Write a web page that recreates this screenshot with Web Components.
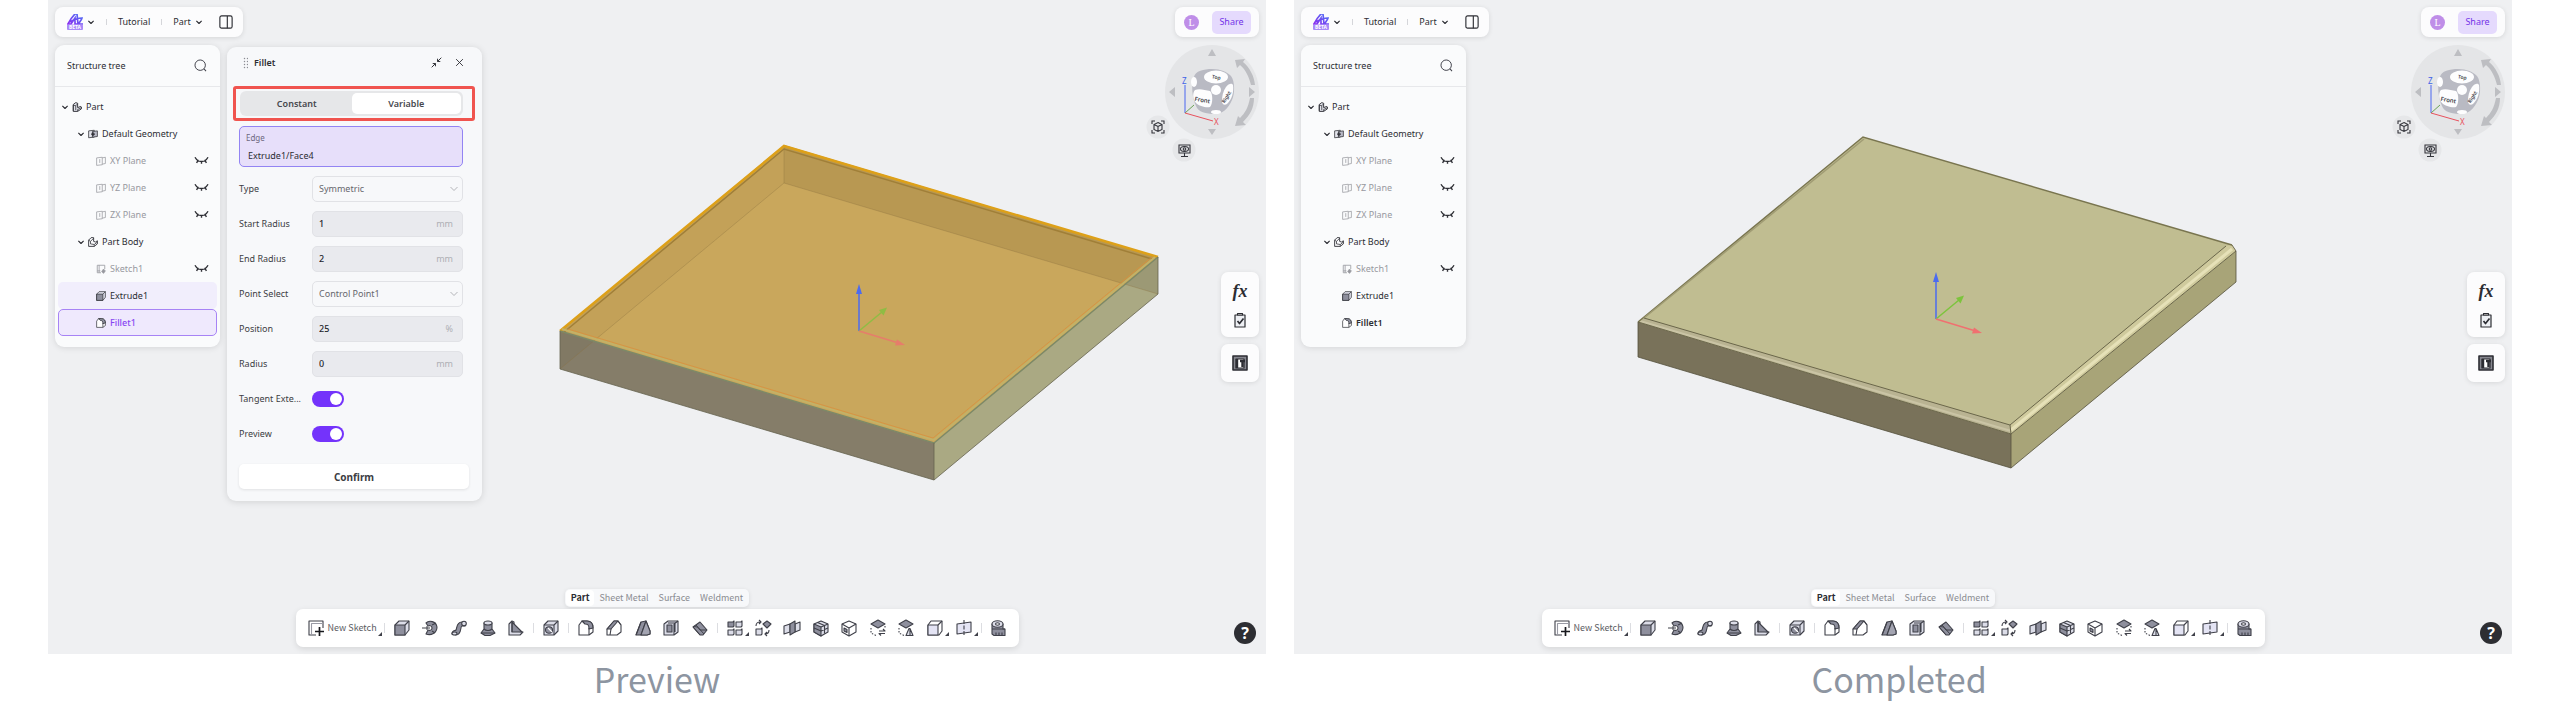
<!DOCTYPE html>
<html lang="en">
<head>
<meta charset="utf-8">
<title>Fillet tool: preview and result</title>
<style>
  body { margin: 0; background: #fff; color: #2c2d33; font-family: "Noto Sans", "Open Sans", sans-serif; font-size: 9px; line-height: 12px; }
  main { display: flex; gap: 28px; padding: 0 48px; }
</style>
</head>
<body>
<main>
  <cad-figure caption="Preview">
    <cad-workspace model="preview">
      <structure-tree slot="tree" hovered="Extrude1" selected="Fillet1"></structure-tree>
      <fillet-panel slot="panel"></fillet-panel>
    </cad-workspace>
  </cad-figure>
  <cad-figure caption="Completed&nbsp;">
    <cad-workspace model="completed">
      <structure-tree slot="tree" current="Fillet1"></structure-tree>
    </cad-workspace>
  </cad-figure>
</main>

<script>
const BASE = `
  :host, *, *::before, *::after { box-sizing: border-box; }
  button, input, select { font: inherit; color: inherit; margin: 0; padding: 0; border: 0; background: none; }
  button { display: flex; align-items: center; justify-content: center; cursor: pointer; }
  svg { display: block; }
`;

/* Icon drawings on a 16 x 16 grid. D is the dark face, L the light one. */
const D = '#8e8f9d', L = '#dcdde8', K = '#3f4049';
const ICONS = {
  chevron: `<path d="M1 5l7 7 7-7" stroke-width="3"/>`,
  thin: `<path d="M1 4l7 7 7-7" stroke-width="1.5"/>`,
  sidebar: `<rect x="1" y="1" width="14" height="14" rx="2" stroke-width="1.3"/><path d="M9.5 1v14" stroke-width="1.3"/>`,
  search: `<circle cx="7.6" cy="7.6" r="6.4" stroke-width="1.2"/><path d="M12.3 12.3l2.5 2.5" stroke-width="1.3"/>`,
  part: `<path d="M2 4l4-3 3 1v7l5-2 1 1v3l-6 4H2z" fill="#e3e4ec" stroke-width="1.5"/><path d="M2 14V5l4 1v7M6 6l3-3M9 12v3M9 12l6-3" stroke-width="1.2"/>`,
  geometry: `<path d="M1 3l9-1v11l-9 1z" stroke-width="1.2" fill="#e3e4ec"/><path d="M7 4l8-1v9l-8 1z" stroke-width="1.2" fill="#b8b9c6"/><path d="M8 5v6M5 8h6" stroke-width="2"/>`,
  body: `<path d="M1 5l4-4h4v6l3 1 3-2v5l-5 4H1z" fill="#fafafc" stroke-width="1.4"/><path d="M1 5l3 2v4l6 1v3M4 7l5-5M10 12l5-4" stroke-width="1.2"/>`,
  plane: `<path d="M1 3l9-1v12l-9 1zM10 3l5-1v10l-5 1" stroke-width="1.2"/><path d="M6 5v6" stroke-width="1.2"/>`,
  sketchSmall: `<path d="M14 8V2H2v12h6M5 2v12M2 11h5" stroke-width="1.3"/><path d="M12 8l3 3-3 4-3-3z" fill="currentColor"/>`,
  eye: `<path d="M0 4c4 7 12 7 16 0M4 7l-2 4M8 9v3M12 7l2 4" stroke-width="1.7"/>`,
  collapse: `<path d="M15 1L9.500 6.500M9.500 2.500v4h4M1 15l5.500-5.500M2.500 9.500h4v4" stroke-width="1.4"/>`,
  close: `<path d="M2 2l12 12M14 2L2 14" stroke-width="1.6"/>`,
  clipboard: `<path d="M3 3h10v12H3z" stroke-width="1.2" fill="#eef0f4"/><path d="M5.500 3V1.500h5V3z" fill="#fff"/><path d="M5.500 9l2 2.500 4-5" stroke-width="1.7"/>`,
  table: `<rect x="1" y="1" width="14" height="14" fill="#85868e" stroke-width="1.6"/><path d="M4 4h8v9H4z" fill="#fff" stroke-width="1.2"/><path d="M5 4v9M8 6h5M10.500 6v6" stroke-width="2.400"/>`,
  sketch: `<path d="M15 8V1H1v14h7" fill="none"/><path d="M3.500 15V3.500H15" stroke="#9a9ba5"/><path d="M11.500 7v9M7 11.500h9" stroke="#17181c" stroke-width="1.7"/>`,
  extrude: `<path d="M1 5l4-4h10v9l-4 5H1z" fill="${L}"/><path d="M1 5h10v10H1z" fill="${D}"/><path d="M11 5l4-4"/>`,
  revolve: `<path d="M4 3c3-3 10-2 11 4 0 6-6 9-11 7l2-4c2 1 4 0 4-2s-2-3-4-2z" fill="${D}"/><path d="M0 8h8M5 6v4" stroke-width="1"/><path d="M10 5l4-2M10 11l3 2"/>`,
  sweep: `<path d="M1 14c0-4 3-3 4-4s0-8 6-8h3v4h-3c-2 0 0 9-6 9z" fill="${D}"/><circle cx="13" cy="3.500" r="2.300" fill="${L}"/><ellipse cx="3.500" cy="13.500" rx="2.500" ry="1.500" fill="${L}"/>`,
  loft: `<path d="M4 3v6l-3 4 4 2.500h5L15 13l-3-4V3z" fill="${D}"/><ellipse cx="8" cy="3" rx="4" ry="2" fill="${L}"/><path d="M4 9c2 2 6 2 8 0M1 13h14" />`,
  rib: `<path d="M1 4l3-3 2 1v9l9 1-3 3H1z" fill="${L}"/><path d="M4 2l10 10H4z" fill="${D}"/><path d="M4 2v10"/>`,
  hole: `<path d="M1 5l4-4h10v10l-4 4H1z" fill="${L}"/><path d="M1 5h10v10M11 5l4-4"/><ellipse cx="6" cy="10" rx="3.500" ry="3.200" fill="${D}"/><path d="M5 8l4 4" stroke="#fff"/>`,
  fillet: `<path d="M1 15V5l3-4h5c4 0 6 3 6 7v4l-4 3z" fill="#fff"/><path d="M4 1h5c4 0 6 3 6 7l-4 1c0-4-1-5-4-5z" fill="${D}"/><path d="M11 8v7"/>`,
  chamfer: `<path d="M1 15V9l7-8h4l3 4v7l-4 3z" fill="#fff"/><path d="M1 9l7-8h4L5 9z" fill="${D}"/><path d="M5 9l-1 6M12 1l3 4"/>`,
  draft: `<path d="M1 15L6 2l5-1 4 10v3l-3 1z" fill="${D}"/><path d="M11 1L6 15M6 2L1 15" /><path d="M11 1l4 10v3l-3 1H6z" fill="#a3a4b1"/>`,
  shell: `<path d="M1 4l4-3h10v11l-4 3H1z" fill="${L}"/><path d="M4 5h5v7H4z" fill="${D}"/><path d="M11 4v11M11 4l4-3M5 3h7v9"/>`,
  thicken: `<path d="M1 7l7-5 7 8-4 5h-3z" fill="${D}"/><path d="M1 7l7 8M4 5l8 9M1 7c3-1 5 0 7 3l7 0" stroke-width="1"/>`,
  pattern: `<path d="M1 2h5l1-1v5l-1 1H1z" fill="${D}"/><path d="M9 2h5l1-1v5l-1 1H9zM1 10h5l1-1v5l-1 1H1zM9 10h5l1-1v5l-1 1H9z" fill="${L}"/>`,
  transform: `<path d="M8 4l4-3 4 3-4 4z" fill="${D}"/><path d="M1 9h5l1-1v6l-1 1H1z" fill="${L}"/><path d="M1 6c0-3 2-4 4-4M4 0l2 2-2 2M14 10c0 3-2 4-4 4M12 16l-2-2 2-2"/>`,
  mirror: `<path d="M0 6l6-2v8l-6 2zM11 4l5-2v8l-5 2z" fill="${L}"/><path d="M6 4l5-3v11l-5 3z" fill="${D}"/>`,
  boolean: `<path d="M1 4l7-3 7 3v8l-7 4-7-4z" fill="${L}"/><path d="M1 4l7 3v9l-7-4z" fill="${D}"/><path d="M8 7l7-3M4.500 2.500l7 3v8M1 8l7 3 7-3"/>`,
  cavity: `<path d="M1 4l7-3 7 3v8l-7 4-7-4z" fill="#fff"/><path d="M1 4l7 4v8M8 8l7-4"/><path d="M3 8l3 1.500v3L3 11z" fill="${D}"/>`,
  replace: `<path d="M1 4l7-4 7 4-7 4z" fill="${D}"/><path d="M1 8v5l6 3M15 6v3" stroke-dasharray="1.500 1.500"/><path d="M9 11h6l-2-2M15 13.500H9l2 2"/>`,
  offset: `<path d="M1 4l7-4 7 4-7 4z" fill="${D}"/><path d="M1 8v5l6 3" stroke-dasharray="1.500 1.500"/><path d="M8 15.500l3-7h1l3 7zM12 9v6" fill="${L}"/>`,
  block: `<path d="M1 5l3-4h11v10l-3 4H1z" fill="#fff"/><path d="M1 5h10v10H1z" fill="#e4e4f4"/><path d="M11 5l4-4"/>`,
  section: `<path d="M1 4l14-2v10L1 14z" fill="#e4e4f4"/><path d="M8 0v16" stroke-dasharray="4 1.500"/>`,
  measure: `<path d="M2 4v10l2 1.500h11V9H13V4z" fill="${D}"/><ellipse cx="7.500" cy="4" rx="5.500" ry="3.200" fill="${L}"/><ellipse cx="7.500" cy="4" rx="2" ry="1.200" fill="#fff"/><path d="M2 9h13M6 12.500v3M9 12.500v3M12 12.500v3"/>`
};

const TOOL_GROUPS = [
  ['extrude', 'revolve', 'sweep', 'loft', 'rib'],
  ['hole'],
  ['fillet', 'chamfer', 'draft', 'shell', 'thicken'],
  ['pattern+', 'transform', 'mirror', 'boolean', 'cavity', 'replace', 'offset', 'block+', 'section+'],
  ['measure']
];

function define(name, render) {
  customElements.define(name, class extends HTMLElement {
    connectedCallback() {
      if (this.shadowRoot) return;
      const tpl = document.createElement('template');
      tpl.innerHTML = render(this);
      this.attachShadow({ mode: 'open' }).append(tpl.content);
    }
  });
}

define('cad-icon', el => `<style>
  :host { display: block; flex: none; width: 16px; height: 16px; }
  svg { display: block; width: 100%; height: 100%; }
</style><svg viewBox="0 0 16 16" fill="none" stroke="${el.hasAttribute('tool') ? K : 'currentColor'}" stroke-width="1.1" stroke-linejoin="round" overflow="visible" aria-hidden="true">${ICONS[el.getAttribute('name')] || ''}</svg>`);

define('cad-figure', el => `<style>
  :host { display: block; flex: 1; min-width: 0; }
  figure { margin: 0; }
  figcaption { font: 400 34px/50px "Noto Sans CJK SC", "Noto Sans", sans-serif; color: #8d95a1; text-align: center; }
</style><figure><slot></slot><figcaption>${el.getAttribute('caption')}</figcaption></figure>`);

define('top-bar', () => `<style>${BASE}
  :host { display: flex; align-items: center; width: 188px; height: 30px; padding: 0 10px 0 12px; border-radius: 8px; background: #fcfcfd; box-shadow: 0 1px 5px #0000001c; }
  .logo { width: 16px; height: 16px; margin-right: 5px; }
  .tiny { width: 6px; height: 6px; }
  i { width: 1px; height: 6px; background: #d5d6da; }
  i.a { margin: 0 11px 0 12px; }
  i.b { margin: 0 11px; }
  .part { gap: 5px; }
  .side { margin-left: auto; }
  .side cad-icon { width: 14px; height: 14px; }
</style>
<button aria-label="Main menu">
  <svg class="logo" viewBox="0 0 16 16"><defs><linearGradient id="g" x1="0" y1="1" x2="1" y2="0"><stop offset="0" stop-color="#8b2cf0"/><stop offset="1" stop-color="#4a78f5"/></linearGradient></defs>
    <path d="M1 10C3 6 6 2 8 0h2l1 10H8L8 4 4 10zM3 8c2-2 9-4 12-4-1 3-3 4-3 6h4" fill="none" stroke="url(#g)" stroke-width="1.700"/>
    <rect x="0" y="10.500" width="16" height="5.500" rx="1" fill="#a98af8"/>
    <text x="8" y="15.200" font-size="5" font-weight="700" fill="#fff" text-anchor="middle">BETA</text></svg>
  <cad-icon class="tiny" name="chevron"></cad-icon></button>
<i class="a"></i><span>Tutorial</span><i class="b"></i>
<button class="part">Part <cad-icon class="tiny" name="chevron"></cad-icon></button>
<button class="side" aria-label="Toggle side panel"><cad-icon name="sidebar"></cad-icon></button>`);

const TREE = [
  ['Part', 1, 'part'], ['Default Geometry', 2, 'geometry'],
  ['XY Plane', 3, 'plane', true], ['YZ Plane', 3, 'plane', true], ['ZX Plane', 3, 'plane', true],
  ['Part Body', 2, 'body'], ['Sketch1', 3, 'sketchSmall', true], ['Extrude1', 3, 'extrude'], ['Fillet1', 3, 'fillet']
];

define('structure-tree', el => `<style>${BASE}
  :host { display: block; width: 165px; border-radius: 9px; background: #fafbfc; box-shadow: 0 1px 6px #0000001c; }
  header { display: flex; align-items: center; justify-content: space-between; height: 42px; padding: 0 13px 0 12px; border-bottom: 1px solid #e7e8eb; }
  header cad-icon { width: 13px; height: 13px; color: #3f4049; }
  ul { list-style: none; margin: 0; padding: 6px 3px 11px; }
  li { display: flex; align-items: center; gap: 4px; height: 27px; padding-right: 8px; border: 1px solid transparent; border-radius: 5px; }
  .l1 { padding-left: 3px; } .l2 { padding-left: 19px; } .l3 { padding-left: 37px; }
  .chev { width: 6px; height: 6px; }
  .ico { width: 10px; height: 10px; }
  .eye { margin-left: auto; color: #2c2d33; }
  .eye cad-icon { width: 13px; height: 13px; }
  .muted { color: #98999f; }
  .hovered { background: #f1eefc; }
  .selected { background: #efe9fd; border-color: #a783f5; }
  .selected span { color: #8747f2; font-weight: 500; }
  .current span { font-weight: 600; }
</style>
<header><span>Structure tree</span><button aria-label="Search"><cad-icon name="search"></cad-icon></button></header>
<ul>${TREE.map(([name, level, icon, hidden]) => `
  <li class="l${level} ${hidden ? 'muted' : ''} ${['hovered', 'selected', 'current'].filter(s => el.getAttribute(s) === name).join(' ')}">
    ${level < 3 ? '<button aria-label="Collapse"><cad-icon class="chev" name="chevron"></cad-icon></button>' : ''}
    <cad-icon class="ico" name="${icon}"></cad-icon><span>${name}</span>
    ${hidden ? '<button class="eye" aria-label="Show"><cad-icon name="eye"></cad-icon></button>' : ''}
  </li>`).join('')}</ul>`);

const selectRow = (id, label, value) => `<div class="row"><label for="${id}">${label}</label><div class="ctl"><select id="${id}"><option>${value}</option></select><cad-icon name="thin"></cad-icon></div></div>`;
const inputRow = (id, label, value, unit) => `<div class="row"><label for="${id}">${label}</label><div class="ctl num"><input id="${id}" value="${value}"><span>${unit}</span></div></div>`;
const switchRow = (id, label) => `<div class="row"><label for="${id}">${label}</label><input type="checkbox" role="switch" id="${id}" checked></div>`;

define('fillet-panel', () => `<style>${BASE}
  :host { display: block; width: 255px; padding-bottom: 12px; border-radius: 9px; background: #f7f8fa; box-shadow: 0 1px 7px #00000020; }
  header { display: flex; align-items: center; height: 31px; padding: 0 18px 0 16px; }
  .grip { width: 5px; height: 12px; margin-right: 6px; background: radial-gradient(circle, #8b8c92 0 30%, transparent 50%) 0 0 / 3px 3px; }
  h2 { flex: 1; margin: 0; font-size: 9px; font-weight: 600; }
  header button + button { margin-left: 13px; }
  header .c { width: 11px; height: 11px; } header .x { width: 9px; height: 9px; }
  .mark { margin: 8px 7px 5px 6px; padding: 2px 9px 2px 4px; border: 3px solid #f0544f; border-radius: 3px; }
  .seg { display: grid; grid-template-columns: 1fr 1fr; height: 25px; padding: 2px; border-radius: 6px; background: #e6e7e9; }
  .seg button { font-weight: 600; color: #46474d; }
  .seg .on { background: #fff; border-radius: 5px; }
  form { display: grid; grid-template-columns: minmax(0, 1fr); gap: 9px; padding: 0 19px 0 12px; }
  .edge { display: grid; grid-template-rows: 19px 18px; align-items: center; height: 41px; padding: 1px 6px; border: 1px solid #9384f3; border-radius: 5px; background: #e7dffa; }
  .edge label { font-size: 8px; color: #6d6880; }
  .edge input { width: 100%; padding-left: 2px; }
  .row { display: grid; grid-template-columns: 73px minmax(0, 1fr); align-items: center; height: 26px; color: #3c3d43; }
  .ctl { display: flex; align-items: center; height: 26px; padding: 0 9px 0 6px; border: 1px solid #e1e2e6; border-radius: 5px; }
  .ctl select { flex: 1; min-width: 0; appearance: none; height: 24px; color: #66676d; }
  .ctl cad-icon { width: 8px; height: 8px; margin-right: -5px; color: #9c9da2; }
  .num { background: #e9eaee; }
  .num input { flex: 1; min-width: 0; color: #24252b; font-weight: 500; }
  .num span { color: #aeafb4; }
  [role=switch] { appearance: none; display: block; width: 32px; height: 16px; padding: 2px; border-radius: 8px; background: #7433fb; }
  [role=switch]::before { content: ""; display: block; width: 12px; height: 12px; margin-left: auto; border-radius: 50%; background: #fff; }
  .confirm { width: 230px; height: 25px; margin: 17px 0 0 12px; border-radius: 5px; background: #fff; font-size: 10px; font-weight: 700; color: #3c3d43; box-shadow: 0 1px 3px #00000018; }
</style>
<header><i class="grip"></i><h2>Fillet</h2>
  <button aria-label="Minimize"><cad-icon class="c" name="collapse"></cad-icon></button>
  <button aria-label="Close"><cad-icon class="x" name="close"></cad-icon></button></header>
<div class="mark"><div class="seg"><button>Constant</button><button class="on" aria-pressed="true">Variable</button></div></div>
<form>
  <div class="edge"><label for="edge">Edge</label><input id="edge" value="Extrude1/Face4"></div>
  ${selectRow('type', 'Type', 'Symmetric')}
  ${inputRow('start', 'Start Radius', '1', 'mm')}
  ${inputRow('end', 'End Radius', '2', 'mm')}
  ${selectRow('point', 'Point Select', 'Control Point1')}
  ${inputRow('position', 'Position', '25', '%')}
  ${inputRow('radius', 'Radius', '0', 'mm')}
  ${switchRow('tangent', 'Tangent Exte...')}
  ${switchRow('preview', 'Preview')}
</form>
<button class="confirm">Confirm</button>`);

define('share-bar', () => `<style>${BASE}
  :host { display: flex; align-items: center; justify-content: space-between; width: 84px; height: 30px; padding: 0 8px 0 9px; border-radius: 8px; background: #fcfcfd; box-shadow: 0 1px 5px #0000001c; }
  .avatar { width: 15px; height: 15px; border-radius: 50%; background: #bf8ee8; color: #fff; font: 10px/15px "Liberation Serif", serif; }
  .share { width: 39px; height: 23px; border-radius: 5px; background: #e5dafd; color: #7433e8; }
</style><button class="avatar">L</button><button class="share">Share</button>`);

/* View cube with its orbit ring, axis triad and two round view buttons. */
define('view-navigator', () => `<style>
  :host { display: block; width: 113px; height: 118px; }
  svg { display: block; }
  text { font-family: "Noto Sans", sans-serif; }
</style><svg width="113" height="118" viewBox="0 0 113 118" role="img" aria-label="View cube">
  <circle cx="66" cy="48" r="47" fill="#e4e5e7"/>
  <g fill="#bdbec2"><path d="M66 5l4 7h-8zM66 91l4-6h-8zM23 48l6-5v10zM109 48l-6-5v10z"/>
    <path d="M89 16l10-1-2 3c7 6 11 14 12 23h-4c-2-8-5-15-11-20l-3 3zM89 82l3-10 2 2c5-5 8-10 10-20h4c0 10-4 17-11 24l3 3z"/></g>
  <path d="M48 33c1-6 10-8 18-8 9 0 15 3 19 7 4 5 4 18 1 24-4 9-10 14-17 14-9 0-17-2-19-8-4-9-5-21-2-29z" fill="#b9bac3"/>
  <g fill="#fdfdfe"><ellipse cx="70" cy="33" rx="12" ry="6.500"/><path d="M49 46c4-2 10 0 15 1 3 2 3 13 0 16-4 1-11-1-14-4-3-3-4-10-1-13z"/>
    <path d="M80 43c3-4 6-4 7-2 1 7-1 14-6 19-3 2-5 0-5-3 0-5 1-10 4-14z"/><circle cx="70" cy="46" r="5"/><ellipse cx="48" cy="38" rx="3" ry="5"/><ellipse cx="70" cy="68" rx="5" ry="2"/></g>
  <g font-size="6" font-weight="600" fill="#3b3c44" text-anchor="middle"><text transform="translate(56 58) rotate(10)">Front</text><text transform="translate(82 54) rotate(-58)" font-size="5">Right</text><text transform="translate(70 35) rotate(10)" font-size="5">Top</text></g>
  <path d="M39 69V41" stroke="#4b66f0"/><path d="M39 69l9-8" stroke="#6aa356"/><path d="M39 69l28 8" stroke="#e8515e"/>
  <text x="36" y="40" font-size="8" fill="#3f62e8">Z</text><text x="68" y="81" font-size="8" fill="#e8515e">X</text>
  <circle cx="12" cy="83" r="11.500" fill="#e6e7e9"/><circle cx="38" cy="106" r="11.500" fill="#e6e7e9"/>
  <g fill="none" stroke="#33343b" stroke-width="1.100"><path d="M6 80v-3h3M15 77h3v3M18 86v3h-3M9 89H6v-3M12 78.500l4 2v5l-4 2-4-2v-5zM8 80.500l4 2 4-2M12 82.500v5"/>
    <path d="M33 101h11v8H33zM38.500 109v3M35 112.500h7"/><ellipse cx="38.500" cy="105" rx="4" ry="2.500"/><circle cx="38.500" cy="105" r="1.300"/></g>
</svg>`);

define('side-tools', () => `<style>${BASE}
  :host { display: grid; gap: 7px; width: 38px; }
  div { display: grid; justify-items: center; align-content: center; gap: 12px; height: 38px; border-radius: 7px; background: #fcfcfd; box-shadow: 0 1px 5px #0000001a; }
  .two { height: 65px; }
  .fx { height: 18px; font: italic 700 18px/18px "Liberation Serif", serif; color: #2c2d33; }
</style>
<div class="two"><button class="fx" aria-label="Functions">fx</button><button aria-label="Checks"><cad-icon name="clipboard"></cad-icon></button></div>
<div><button aria-label="Parameters"><cad-icon name="table"></cad-icon></button></div>`);

define('mode-tabs', () => `<style>${BASE}
  :host { display: flex; align-items: center; justify-self: center; height: 18px; padding: 1px; border-radius: 5px; background: #f7f8fa; box-shadow: 0 1px 4px #0000001a; }
  button { height: 16px; padding: 0 5px; color: #8a8b91; font-family: "Noto Sans CJK SC", "Noto Sans", sans-serif; }
  .on { border-radius: 4px; background: #fff; color: #2c2d33; font-weight: 700; }
</style><button class="on" aria-pressed="true">Part</button><button>Sheet Metal</button><button>Surface</button><button>Weldment</button>`);

define('tool-bar', () => `<style>${BASE}
  :host { display: flex; align-items: center; width: 723px; height: 38px; padding: 0 6px 0 12px; border-radius: 7px; background: #fff; box-shadow: 0 2px 6px #0000001c; }
  button { position: relative; flex: 1; height: 28px; }
  .new { flex: none; gap: 4px; width: 74px; justify-content: flex-start; color: #5a5b61; font-family: "Noto Sans CJK SC", "Noto Sans", sans-serif; }
  .more::after { content: ""; position: absolute; right: 0; bottom: 6px; border: 2px solid transparent; border-right-color: #3f4049; border-bottom-color: #3f4049; }
  i { width: 6px; height: 10px; background: linear-gradient(#dcdde1, #dcdde1) center / 1px 100% no-repeat; }
</style>
<button class="new more"><cad-icon tool name="sketch"></cad-icon>New Sketch</button>
${TOOL_GROUPS.map(g => '<i></i>' + g.map(t => {
    const name = t.replace('+', '');
    return `<button class="${t === name ? '' : 'more'}" aria-label="${name}"><cad-icon tool name="${name}"></cad-icon></button>`;
  }).join('')).join('')}`);

const triad = (x, y, opacity) => `<g transform="translate(${x} ${y})" stroke-width="1.500">
  <path d="M0 0V-38" stroke="#4b6bf0"/><path d="M0-47l3 10h-6z" fill="#4b6bf0"/>
  <g opacity="${opacity}"><path d="M0 0l23-19" stroke="#7cc43c"/><path d="M28-23.500l-3.500 8-4.500-5.500z" fill="#7cc43c"/>
  <path d="M0 0l38 11.500" stroke="#f07070"/><path d="M46 14l-10 .5 2-6z" fill="#f07070"/></g></g>`;

const MODELS = {
  preview: `
    <path d="M512 331L736 145l374 112-224 186z" fill="#c9a75c"/>
    <path d="M512 331l374 112v37L512 369z" fill="#857d69"/>
    <path d="M886 443l224-186v37L886 480z" fill="#aaa983"/>
    <path d="M736 145l374 112v37L736 183z" fill="#2a1000" opacity=".1"/>
    <path d="M736 145v38L512 369v-38z" fill="#2a1000" opacity=".04"/>
    <path d="M736 145v38L512 369M736 183l374 111" fill="none" stroke="#8b7440" stroke-width=".7" opacity=".5"/>
    <path d="M515 333L736 149l368 110" fill="none" stroke="#a07f38" stroke-width="1.500"/>
    <path d="M512 331L736 146l374 111" fill="none" stroke="#dda019" stroke-width="2.500"/>
    <path d="M512 331l374 112 224-186" fill="none" stroke="#7d8966" stroke-width="1.500"/>
    <path d="M514 329l372 111 221-183" fill="none" stroke="#c4b166" stroke-width="2"/>
    <path d="M520 329l365 109 219-181" fill="none" stroke="#d98f3e" stroke-width=".8"/>
    <path d="M512 331v38l374 111 224-186v-37M886 443v37" fill="none" stroke="#66634f" stroke-width=".8"/>
    ${triad(811, 331, 0.75)}`,
  completed: `
    <path d="M344 322L569 137l369 108 4 6-225 183z" fill="#c0bd91"/>
    <path d="M344 322l373 112v34L344 357z" fill="#79725a"/>
    <path d="M717 434l225-183v31L717 468z" fill="#a8a478"/>
    <path d="M344 322l6-4 366 107 1 9z" fill="#b9b392"/>
    <path d="M346 321l371 110" stroke="#cac4a5" stroke-width="2"/>
    <path d="M717 434l-1-9 216-179 6-1 4 6z" fill="#cfca9d"/>
    <path d="M717 430l221-181" stroke="#e6e1b8" stroke-width="3"/>
    <path d="M344 322L569 137l369 108" fill="none" stroke="#79754f" stroke-width="1.500"/>
    <path d="M350 318l220-179" stroke="#a09c74" stroke-width="1.500"/>
    <path d="M350 318l366 107 216-179M716 425l1 9M344 322l373 112 225-183" fill="none" stroke="#6a664a" stroke-width="1"/>
    <path d="M344 322v35l373 111 225-186v-31l-4-6M717 434v34" fill="none" stroke="#55523d" stroke-width=".8"/>
    ${triad(642, 319, 1)}`
};

define('cad-workspace', el => `<style>${BASE}
  :host { display: flex; position: relative; flex-direction: column; justify-content: space-between; aspect-ratio: 1218 / 654; padding: 7px; background: #eff0f2; }
  .scene { position: absolute; inset: 0; width: 100%; height: 100%; }
  .top, .bottom { position: relative; }
  .top { display: flex; justify-content: space-between; }
  .left { display: grid; gap: 8px; align-content: start; }
  .panels { display: flex; align-items: flex-start; gap: 7px; }
  ::slotted([slot=panel]) { margin-top: 2px; }
  .right { display: grid; justify-items: end; align-content: start; gap: 7px; }
  side-tools { margin-top: 103px; }
  .bottom { display: grid; grid-template-columns: 1fr auto 1fr; align-items: end; }
  .dock { grid-column: 2; display: grid; gap: 2px; }
  .help { justify-self: end; width: 22px; height: 22px; margin: 0 3px 3px 0; border-radius: 50%; background: #2d2e33; color: #fff; font: 700 16px/22px "Noto Sans", sans-serif; }
</style>
<svg class="scene" viewBox="0 0 1218 654" role="img" aria-label="Square plate">${MODELS[el.getAttribute('model')]}</svg>
<div class="top">
  <div class="left"><top-bar></top-bar><div class="panels"><slot name="tree"></slot><slot name="panel"></slot></div></div>
  <div class="right"><share-bar></share-bar><view-navigator></view-navigator><side-tools></side-tools></div>
</div>
<div class="bottom"><div class="dock"><mode-tabs></mode-tabs><tool-bar></tool-bar></div><button class="help" aria-label="Help">?</button></div>`);
</script>
</body>
</html>
